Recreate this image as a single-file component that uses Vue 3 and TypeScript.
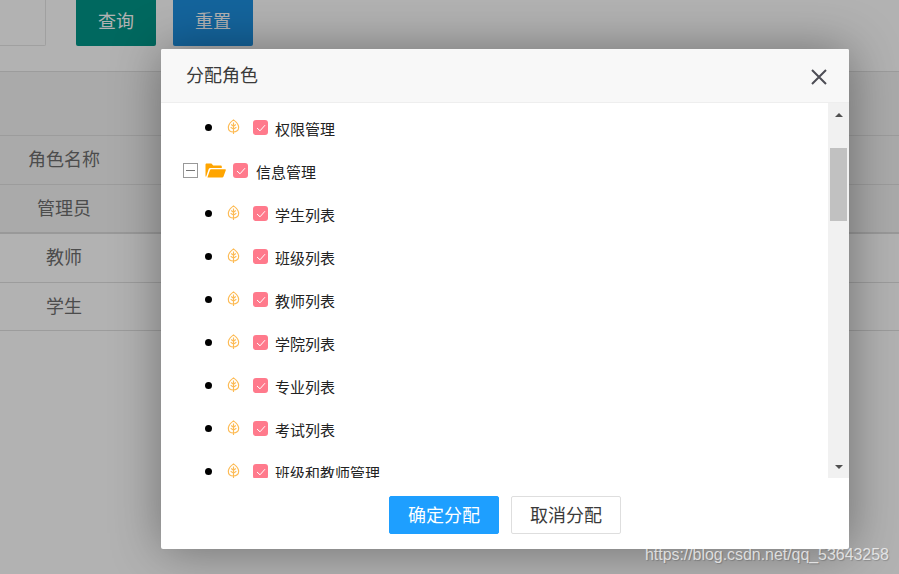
<script setup lang="ts">
const children: string[] = ['学生列表', '班级列表', '教师列表', '学院列表', '专业列表', '考试列表', '班级和教师管理']
const rows: string[] = ['角色名称', '管理员', '教师', '学生']
</script>

<template>
  <div class="page">
    <div class="toolbar">
      <div class="search-input"></div>
      <button class="btn teal">查询</button>
      <button class="btn blue">重置</button>
    </div>
    <div class="table">
      <div class="table-head"></div>
      <div v-for="(r, i) in rows" :key="r" class="table-row" :class="{ thick: i === 1 }">
        <span class="cell">{{ r }}</span>
      </div>
    </div>

    <div class="mask"></div>

    <div class="dialog">
      <div class="dialog-head">
        <span class="dialog-title">分配角色</span>
        <svg class="close" width="16" height="16" viewBox="0 0 16 16">
          <path d="M1 1 L15 15 M15 1 L1 15" stroke="#4d4d55" stroke-width="2" fill="none" />
        </svg>
      </div>

      <div class="dialog-body">
        <div class="tree">
          <div class="leaf-row">
            <span class="bullet"></span>
            <svg class="leaf" width="13" height="16" viewBox="0 0 14 18">
              <path d="M7 1 C3 4 1.2 6.5 1.2 9.5 C1.2 12.8 3.8 14.6 7 14.6 C10.2 14.6 12.8 12.8 12.8 9.5 C12.8 6.5 11 4 7 1 Z M7 4 V17 M7 8.2 L4.4 6.2 M7 8.2 L9.6 6.2 M7 11.4 L3.8 9.2 M7 11.4 L10.2 9.2" fill="none" stroke="#fdbb55" stroke-width="1.3" />
            </svg>
            <span class="check">
              <svg width="10" height="8" viewBox="0 0 10 8"><path d="M1 4 L4 6.8 L9 1.2" fill="none" stroke="#fff" stroke-width="1" /></svg>
            </span>
            <span class="label">权限管理</span>
          </div>

          <div class="parent-row">
            <span class="toggle"><span class="minus"></span></span>
            <svg class="folder" width="21" height="15" viewBox="0 0 21 15">
              <path d="M0.5 13.5 V1.6 C0.5 0.9 1 0.4 1.7 0.4 H6.4 L8.2 2.4 H15.6 C16.3 2.4 16.8 2.9 16.8 3.6 V5 H5.2 C4.5 5 4 5.3 3.7 6 L1.2 13.5 Z" fill="#ffa500" />
              <path d="M2.4 14.6 L5 7 C5.2 6.4 5.6 6.2 6.2 6.2 H20 C20.6 6.2 21 6.7 20.8 7.3 L18.4 13.8 C18.2 14.3 17.8 14.6 17.2 14.6 Z" fill="#ffa500" />
            </svg>
            <span class="check">
              <svg width="10" height="8" viewBox="0 0 10 8"><path d="M1 4 L4 6.8 L9 1.2" fill="none" stroke="#fff" stroke-width="1" /></svg>
            </span>
            <span class="label parent-label">信息管理</span>
          </div>

          <div v-for="c in children" :key="c" class="leaf-row">
            <span class="bullet"></span>
            <svg class="leaf" width="13" height="16" viewBox="0 0 14 18">
              <path d="M7 1 C3 4 1.2 6.5 1.2 9.5 C1.2 12.8 3.8 14.6 7 14.6 C10.2 14.6 12.8 12.8 12.8 9.5 C12.8 6.5 11 4 7 1 Z M7 4 V17 M7 8.2 L4.4 6.2 M7 8.2 L9.6 6.2 M7 11.4 L3.8 9.2 M7 11.4 L10.2 9.2" fill="none" stroke="#fdbb55" stroke-width="1.3" />
            </svg>
            <span class="check">
              <svg width="10" height="8" viewBox="0 0 10 8"><path d="M1 4 L4 6.8 L9 1.2" fill="none" stroke="#fff" stroke-width="1" /></svg>
            </span>
            <span class="label">{{ c }}</span>
          </div>
        </div>

        <div class="scrollbar">
          <span class="arrow up"></span>
          <div class="track"><div class="thumb"></div></div>
          <span class="arrow down"></span>
        </div>
      </div>

      <div class="dialog-foot">
        <button class="foot-btn primary">确定分配</button>
        <button class="foot-btn plain">取消分配</button>
      </div>
    </div>

    <div class="watermark">https://blog.csdn.net/qq_53643258</div>
  </div>
</template>

<style>
html, body { margin: 0; padding: 0; background: #fff; }
</style>

<style scoped>
.page {
  position: relative;
  width: 899px;
  height: 574px;
  overflow: hidden;
  background: #fff;
  font-family: "Noto Sans CJK SC", "Liberation Sans", sans-serif;
}
.toolbar {
  display: flex;
  height: 46px;
  margin-bottom: 25px;
}
.search-input {
  box-sizing: border-box;
  width: 46px;
  height: 46px;
  border: 1px solid #e6e6e6;
  border-left: 0;
  border-top: 0;
  border-radius: 0 0 2px 0;
  margin-right: 30px;
}
.btn {
  width: 80px;
  height: 46px;
  border: 0;
  border-radius: 0 0 2px 2px;
  color: #fff;
  font: 18px "Noto Sans CJK SC", sans-serif;
  padding: 0 0 7px;
}
.teal { background: #009688; margin-right: 17px; }
.blue { background: #1e90e0; }
.table { border-top: 1px solid #e0e0e0; }
.table-head {
  height: 63px;
  background: #f4f4f4;
  border-bottom: 1px solid #e0e0e0;
}
.table-row {
  box-sizing: border-box;
  height: 49px;
  border-bottom: 1px solid #e0e0e0;
  display: flex;
  align-items: center;
}
.table-row:last-child { height: 48px; }
.table-row.thick { border-bottom: 2px solid #dcdcdc; }
.table-row:nth-child(2), .table-row:nth-child(3) { background: #f4f4f4; }
.cell {
  width: 128px;
  text-align: center;
  font-size: 18px;
  line-height: 24px;
  color: #6e6e6e;
  position: relative;
  top: -2px;
}
.mask {
  position: absolute;
  inset: 0;
  background: rgba(0, 0, 0, 0.3);
}
.dialog {
  position: absolute;
  left: 161px;
  top: 49px;
  width: 688px;
  height: 500px;
  background: #fff;
  border-radius: 2px;
  box-shadow: 1px 1px 50px rgba(0, 0, 0, 0.38);
  display: flex;
  flex-direction: column;
}
.dialog-head {
  box-sizing: border-box;
  height: 54px;
  flex: none;
  background: #f8f8f8;
  border-bottom: 1px solid #eee;
  border-radius: 2px 2px 0 0;
  padding: 0 22px 0 25px;
  display: flex;
  align-items: center;
  justify-content: space-between;
}
.dialog-title {
  font-size: 18px;
  line-height: 26px;
  color: #3a3a3a;
  position: relative;
  top: -2px;
}
.close { position: relative; top: 1px; }
.dialog-body {
  height: 375px;
  flex: none;
  display: flex;
  overflow: hidden;
}
.tree {
  flex: 1;
  padding-top: 4px;
  overflow: hidden;
  color: #000;
}
.leaf-row, .parent-row {
  height: 43px;
  display: flex;
  align-items: center;
  white-space: nowrap;
}
.leaf-row { padding-left: 44px; }
.parent-row { padding-left: 22px; }
.bullet {
  width: 7px;
  height: 7px;
  border-radius: 50%;
  background: #000;
  margin-right: 15px;
  position: relative;
  top: -1px;
}
.leaf {
  margin-right: 13px;
  position: relative;
  top: -2px;
}
.check {
  width: 15px;
  height: 15px;
  border-radius: 3px;
  background: #ff7a8c;
  display: flex;
  align-items: center;
  justify-content: center;
  flex: none;
  position: relative;
  top: -1px;
}
.label {
  margin-left: 7px;
  font-size: 15px;
  line-height: 20px;
  color: #222;
}
.parent-label { margin-left: 8px; }
.toggle {
  box-sizing: border-box;
  width: 15px;
  height: 15px;
  border: 1px solid #999;
  background: #fff;
  margin-right: 7px;
  display: flex;
  align-items: center;
  justify-content: center;
  position: relative;
  top: -1px;
}
.minus { width: 9px; height: 1px; background: #777; }
.folder {
  margin-right: 7px;
  position: relative;
  top: -1px;
}
.scrollbar {
  width: 21px;
  flex: none;
  background: #f1f1f1;
  display: flex;
  flex-direction: column;
  align-items: center;
}
.arrow {
  width: 0;
  height: 0;
  flex: none;
  border-left: 4.5px solid transparent;
  border-right: 4.5px solid transparent;
}
.arrow.up { border-bottom: 4.5px solid #505050; margin-top: 10px; }
.arrow.down { border-top: 4.5px solid #505050; margin-bottom: 9px; }
.track {
  flex: 1;
  width: 100%;
  box-sizing: border-box;
  padding: 30.5px 2px 0;
}
.thumb { height: 73px; background: #c1c1c1; }
.dialog-foot {
  flex: 1;
  display: flex;
  justify-content: center;
  align-items: flex-start;
  gap: 12px;
  padding-top: 18px;
}
.foot-btn {
  box-sizing: border-box;
  width: 110px;
  height: 38px;
  border-radius: 2px;
  font: 18px "Noto Sans CJK SC", sans-serif;
  padding: 0 0 2px;
}
.primary { background: #1e9fff; border: 1px solid #1e9fff; color: #fff; }
.plain { background: #fff; border: 1px solid #dedede; color: #3a3a3a; }
.watermark {
  position: absolute;
  left: 645px;
  top: 545px;
  font: 16px/20px "Liberation Sans", sans-serif;
  letter-spacing: -0.05px;
  color: rgba(255, 255, 255, 0.72);
  text-shadow: 1px 1px 1px rgba(0, 0, 0, 0.2);
  white-space: nowrap;
}
</style>
